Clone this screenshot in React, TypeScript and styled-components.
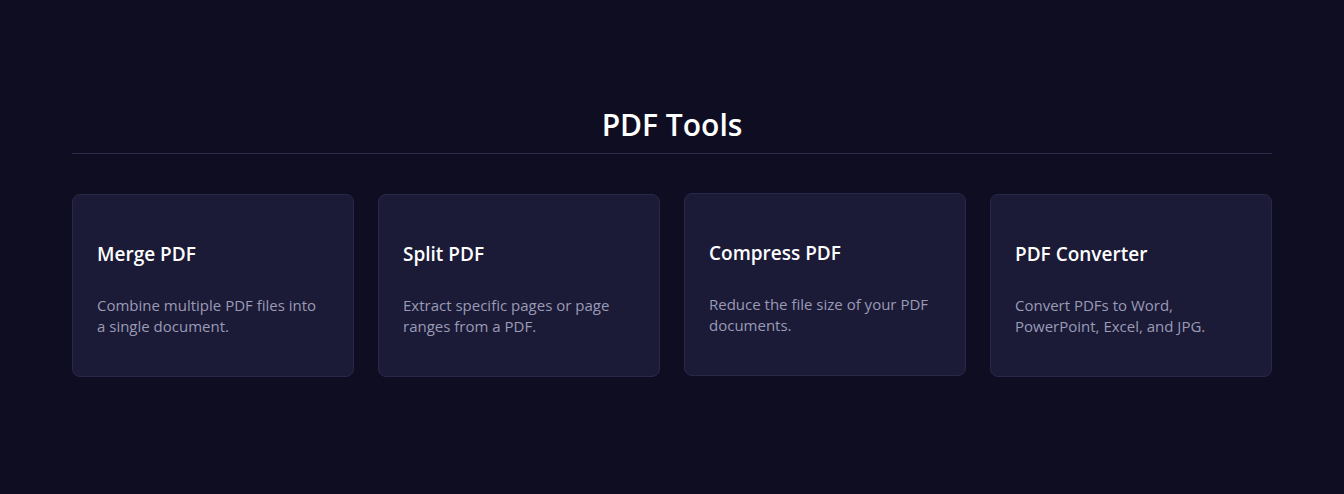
import { createGlobalStyle, styled } from "styled-components";

const GlobalStyle = createGlobalStyle`
  html, body {
    margin: 0;
    padding: 0;
    background: #0e0d22;
  }
  body {
    font-family: "Open Sans", "Noto Sans", sans-serif;
    color: #ffffff;
  }
`;

const TOOLS = [
  { title: "Merge PDF", desc: "Combine multiple PDF files into a single document." },
  { title: "Split PDF", desc: "Extract specific pages or page ranges from a PDF." },
  { title: "Compress PDF", desc: "Reduce the file size of your PDF documents.", lifted: true },
  { title: "PDF Converter", desc: "Convert PDFs to Word, PowerPoint, Excel, and JPG." },
];

export default function App() {
  return (
    <Page>
      <GlobalStyle />
      <Section>
        <Heading>PDF Tools</Heading>
        <Grid>
          {TOOLS.map((tool) => (
            <Card key={tool.title} $lifted={tool.lifted}>
              <CardTitle>{tool.title}</CardTitle>
              <CardDesc>{tool.desc}</CardDesc>
            </Card>
          ))}
        </Grid>
      </Section>
    </Page>
  );
}

const Page = styled.div`
  min-height: 494px;
  background: #0e0d22;
  padding: 104px 72px 0;
  box-sizing: border-box;
`;

const Section = styled.section`
  max-width: 1200px;
  margin: 0 auto;
`;

const Heading = styled.h2`
  margin: 0;
  padding-bottom: 8px;
  border-bottom: 1px solid #2c2a4c;
  text-align: center;
  font-size: 30px;
  line-height: 41px;
  font-weight: 600;
  color: #ffffff;
`;

const Grid = styled.div`
  display: grid;
  grid-template-columns: repeat(4, 1fr);
  gap: 24px;
  margin-top: 40px;
`;

const Card = styled.div<{ $lifted?: boolean }>`
  box-sizing: border-box;
  height: 183px;
  padding: 47px 28px 24px 24px;
  background: #1b1a37;
  border: 1px solid #2a2848;
  border-radius: 8px;
  transform: ${(p) => (p.$lifted ? "translateY(-1px)" : "none")};
`;

const CardTitle = styled.h3`
  margin: 0;
  font-size: 19px;
  line-height: 24px;
  font-weight: 600;
  color: #ffffff;
`;

const CardDesc = styled.p`
  margin: 29px 0 0;
  font-size: 15px;
  line-height: 21px;
  color: #9a9bb5;
`;
